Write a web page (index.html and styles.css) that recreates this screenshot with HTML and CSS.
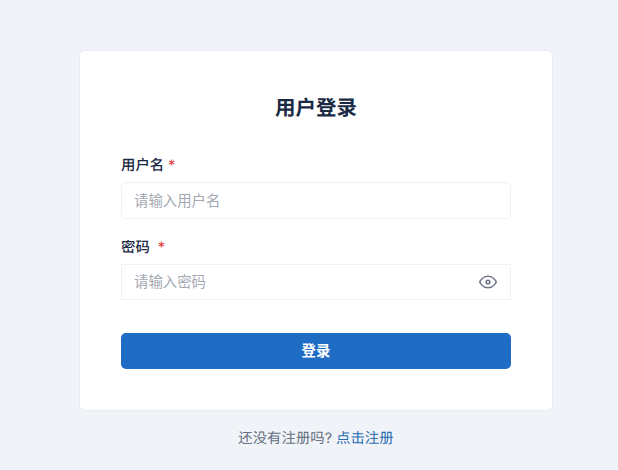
FILE: index.html
```html
<!DOCTYPE html>
<html lang="zh-CN">
<head>
  <meta charset="UTF-8">
  <meta name="viewport" content="width=device-width, initial-scale=1.0">
  <title>用户登录</title>
  <link rel="stylesheet" href="styles.css">
</head>
<body>

  <div class="container">
    <div class="card">
      <h1>用户登录</h1>
      <form class="login-form" onsubmit="return false;">
        <div class="field">
          <label class="field-label" for="username">用户名 <span class="required">*</span></label>
          <input class="text-input" type="text" id="username" placeholder="请输入用户名" autocomplete="off">
        </div>
        <div class="field">
          <label class="field-label" for="password">密码 <span class="required required-wide">*</span></label>
          <div class="password-box">
            <input class="password-input" type="password" id="password" placeholder="请输入密码" autocomplete="off">
            <button class="eye-btn" type="button" aria-label="显示密码">
              <svg width="20" height="20" viewBox="0 0 24 24" fill="none" stroke="#6b7280" stroke-width="1.8" stroke-linecap="round" stroke-linejoin="round">
                <path d="M2 12s3.6-7 10-7 10 7 10 7-3.6 7-10 7-10-7-10-7z"/>
                <circle cx="12" cy="12" r="2.2"/>
              </svg>
            </button>
          </div>
        </div>
        <button class="submit-btn" type="submit">登录</button>
      </form>
    </div>
    <p class="register-tip">还没有注册吗? <a href="#">点击注册</a></p>
  </div>

</body>
</html>
```

FILE: styles.css
```css
* {
  box-sizing: border-box;
}
html, body {
  height: 100%;
  overflow: hidden;
}
body {
  font-family: 'Inter', 'Noto Sans CJK SC', sans-serif;
  text-rendering: geometricPrecision;
  background-color: #f0f4f9;
  margin: 0;
  padding: 50px 0 0 79px;
}
.container {
  width: 474px;
}
.card {
  background: white;
  border: 1px solid #e8ecf1;
  border-radius: 6px;
  padding: 41px;
  height: 361px;
}
h1 {
  font-size: 20.5px;
  line-height: 32px;
  font-weight: 700;
  color: #1a2a44;
  text-align: center;
  margin: 0 0 30px;
}
.field {
  margin-bottom: 17px;
}
.field-label {
  display: block;
  font-size: 14.4px;
  line-height: 20px;
  font-weight: 500;
  color: #1a2a44;
  padding-top: 2px;
  margin-bottom: 6px;
}
.required {
  color: #e53e3e;
  font-weight: 400;
}
.required-wide {
  margin-left: 4px;
}
.text-input, .password-input {
  font-family: inherit;
  font-size: 14.4px;
  line-height: 20px;
  color: #1a2a44;
  outline: none;
}
.text-input::placeholder, .password-input::placeholder {
  color: #a3a9b3;
  opacity: 1;
}
.text-input {
  display: block;
  width: 100%;
  height: 37px;
  padding: 0 12px 1px;
  border: 1px solid #eef1f5;
  border-radius: 5px;
}
.password-box {
  display: flex;
  align-items: center;
  height: 36px;
  border: 1px solid #eef1f5;
  padding: 0 12px;
}
.password-input {
  flex: 1;
  min-width: 0;
  height: 100%;
  border: none;
  padding: 0 0 2px;
}
.eye-btn {
  display: flex;
  background: none;
  border: none;
  padding: 0;
  cursor: pointer;
}
.submit-btn {
  display: block;
  width: 100%;
  height: 36px;
  margin-top: 33px;
  padding: 0 0 3px;
  background-color: #1f6cc4;
  color: white;
  border: none;
  border-radius: 5px;
  font-family: inherit;
  font-size: 14.4px;
  font-weight: 600;
  cursor: pointer;
}
.register-tip {
  margin: 18px 0 0;
  text-align: center;
  font-size: 14.4px;
  line-height: 20px;
  color: #667080;
}
.register-tip a {
  color: #2b6cb0;
  text-decoration: none;
}
```
